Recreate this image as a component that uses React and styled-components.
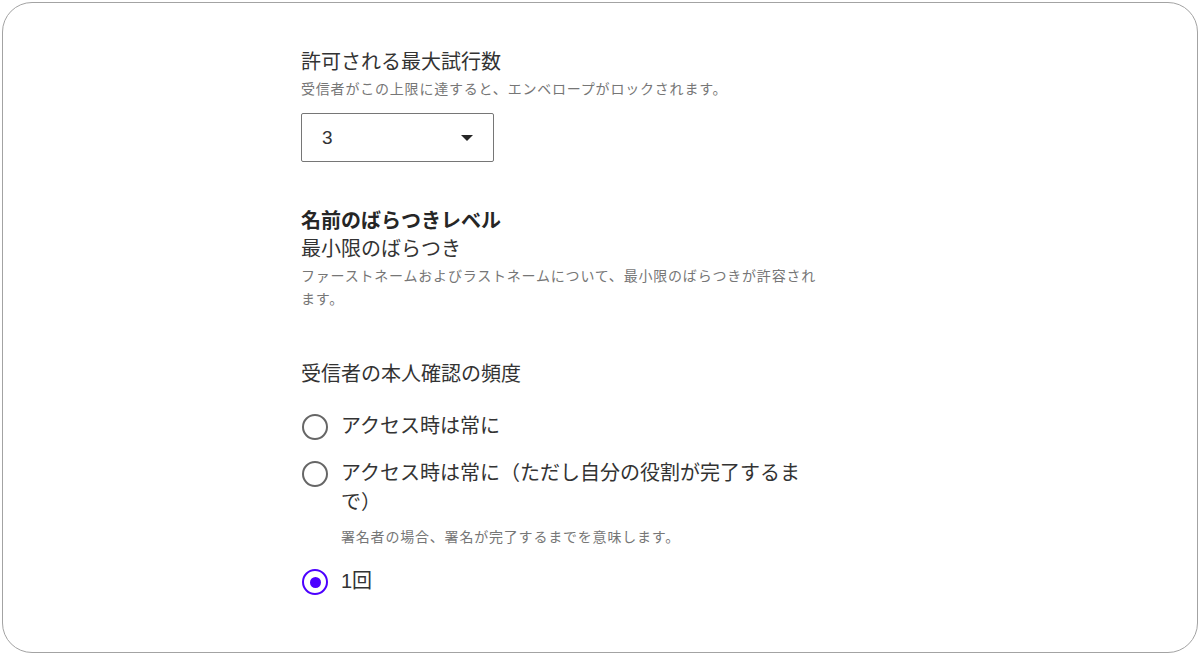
import React, { useState } from "react";
import styled, { createGlobalStyle } from "styled-components";

const Global = createGlobalStyle`
  html, body { margin: 0; padding: 0; background: #fff; }
  body { font-family: "Liberation Sans", "Noto Sans CJK JP", sans-serif; }
  * { box-sizing: border-box; }
`;

const Frame = styled.div`
  margin: 2px;
  width: 1196px;
  height: 651px;
  border: 1px solid #a3a3a3;
  border-radius: 30px;
  background: #fff;
  overflow: hidden;
`;

const Column = styled.div`
  width: 520px;
  margin-left: 298px;
  padding-top: 45px;
  display: flex;
  flex-direction: column;
`;

const Section = styled.section`
  display: flex;
  flex-direction: column;
  margin-top: ${(p) => p.$gap || 0}px;
`;

const Title = styled.div`
  font-size: 20px;
  line-height: 28px;
  color: ${(p) => (p.$bold ? "#262626" : "#333")};
  font-weight: ${(p) => (p.$bold ? 700 : 400)};
`;

const Help = styled.div`
  font-size: 14px;
  letter-spacing: 0.8px;
  line-height: 23px;
  color: #767676;
  margin-top: ${(p) => p.$mt || 0}px;
`;

const SelectBox = styled.div`
  margin-top: 12px;
  width: 193px;
  height: 49px;
  border: 1px solid #767676;
  border-radius: 2px;
  display: flex;
  align-items: center;
  justify-content: space-between;
  padding: 0 20px 0 20px;
  font-size: 19px;
  color: #333;
`;

const Caret = styled.span`
  width: 0;
  height: 0;
  border-left: 6px solid transparent;
  border-right: 6px solid transparent;
  border-top: 6px solid #262626;
`;

const RadioList = styled.div`
  display: flex;
  flex-direction: column;
  margin-top: 24px;
  gap: 18px;
`;

const RadioRow = styled.label`
  display: flex;
  align-items: flex-start;
  gap: 13px;
  padding-left: 1px;
  cursor: pointer;
`;

const Circle = styled.span`
  flex: none;
  width: 26px;
  height: 26px;
  margin-top: 2px;
  border-radius: 50%;
  border: 2px solid ${(p) => (p.$on ? "#4c00ff" : "#666")};
  display: flex;
  align-items: center;
  justify-content: center;
  &::after {
    content: "";
    width: 11px;
    height: 11px;
    border-radius: 50%;
    background: ${(p) => (p.$on ? "#4c00ff" : "transparent")};
  }
`;

const RadioText = styled.div`
  display: flex;
  flex-direction: column;
`;

const RadioLabel = styled.div`
  font-size: 20px;
  line-height: 29px;
  color: #333;
`;

const RadioHelp = styled.div`
  font-size: 14px;
  letter-spacing: 0.8px;
  line-height: 23px;
  color: #767676;
  margin-top: 9px;
`;

const options = [
  { id: "a", label: "アクセス時は常に" },
  {
    id: "b",
    label: "アクセス時は常に（ただし自分の役割が完了するまで）",
    help: "署名者の場合、署名が完了するまでを意味します。",
  },
  { id: "c", label: "1回" },
];

export default function App() {
  const [sel, setSel] = useState("c");
  return (
    <>
      <Global />
      <Frame>
        <Column>
          <Section>
            <Title>許可される最大試行数</Title>
            <Help $mt={2}>受信者がこの上限に達すると、エンベロープがロックされます。</Help>
            <SelectBox>
              <span>3</span>
              <Caret />
            </SelectBox>
          </Section>
          <Section $gap={45}>
            <Title $bold>名前のばらつきレベル</Title>
            <Title>最小限のばらつき</Title>
            <Help $mt={2}>
              ファーストネームおよびラストネームについて、最小限のばらつきが許容されます。
            </Help>
          </Section>
          <Section $gap={49}>
            <Title>受信者の本人確認の頻度</Title>
            <RadioList>
              {options.map((o) => (
                <RadioRow key={o.id} onClick={() => setSel(o.id)}>
                  <Circle $on={sel === o.id} />
                  <RadioText>
                    <RadioLabel>{o.label}</RadioLabel>
                    {o.help && <RadioHelp>{o.help}</RadioHelp>}
                  </RadioText>
                </RadioRow>
              ))}
            </RadioList>
          </Section>
        </Column>
      </Frame>
    </>
  );
}
